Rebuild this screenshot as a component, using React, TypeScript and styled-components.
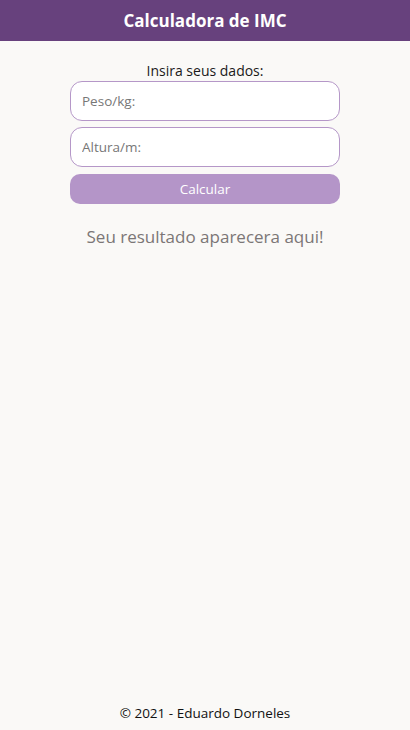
import React from "react";
import styled, { createGlobalStyle } from "styled-components";

const Global = createGlobalStyle`
  html, body { margin: 0; padding: 0; background: #faf9f7; }
  body { font-family: "Open Sans", "Noto Sans", sans-serif; }
  * { box-sizing: border-box; }
`;

const Page = styled.div`
  min-height: 730px;
  display: flex;
  flex-direction: column;
`;

const Header = styled.header`
  height: 41px;
  background: #67417d;
  display: flex;
  align-items: center;
  justify-content: center;
  color: #fff;
  font-size: 17px;
  font-weight: 700;
`;

const Main = styled.main`
  flex: 1;
  display: flex;
  flex-direction: column;
  align-items: center;
  padding-top: 20px;
`;

const Form = styled.form`
  width: 270px;
  display: flex;
  flex-direction: column;
  align-items: stretch;
  gap: 6px;
`;

const Label = styled.div`
  text-align: center;
  font-size: 14px;
  color: #1a1a1a;
  line-height: 20px;
  margin-bottom: -6px;
`;

const Input = styled.input`
  height: 40px;
  border: 1px solid #b597c8;
  border-radius: 12px;
  background: #fff;
  padding: 0 11px;
  font-family: inherit;
  font-size: 13.5px;
  outline: none;
  &::placeholder { color: #777; }
`;

const Button = styled.button`
  height: 30px;
  margin-top: 1px;
  border: none;
  border-radius: 10px;
  background: #b495c8;
  color: #fff;
  font-family: inherit;
  font-size: 13.5px;
`;

const Result = styled.p`
  margin: 21px 0 0;
  font-size: 17px;
  color: #7b7676;
`;

const Footer = styled.footer`
  height: 34px;
  display: flex;
  align-items: center;
  justify-content: center;
  font-size: 13.5px;
  color: #111;
`;

export default function App() {
  return (
    <Page>
      <Global />
      <Header>Calculadora de IMC</Header>
      <Main>
        <Form onSubmit={(e) => e.preventDefault()}>
          <Label>Insira seus dados:</Label>
          <Input placeholder="Peso/kg:" />
          <Input placeholder="Altura/m:" />
          <Button type="submit">Calcular</Button>
        </Form>
        <Result>Seu resultado aparecera aqui!</Result>
      </Main>
      <Footer>© 2021 - Eduardo Dorneles</Footer>
    </Page>
  );
}
